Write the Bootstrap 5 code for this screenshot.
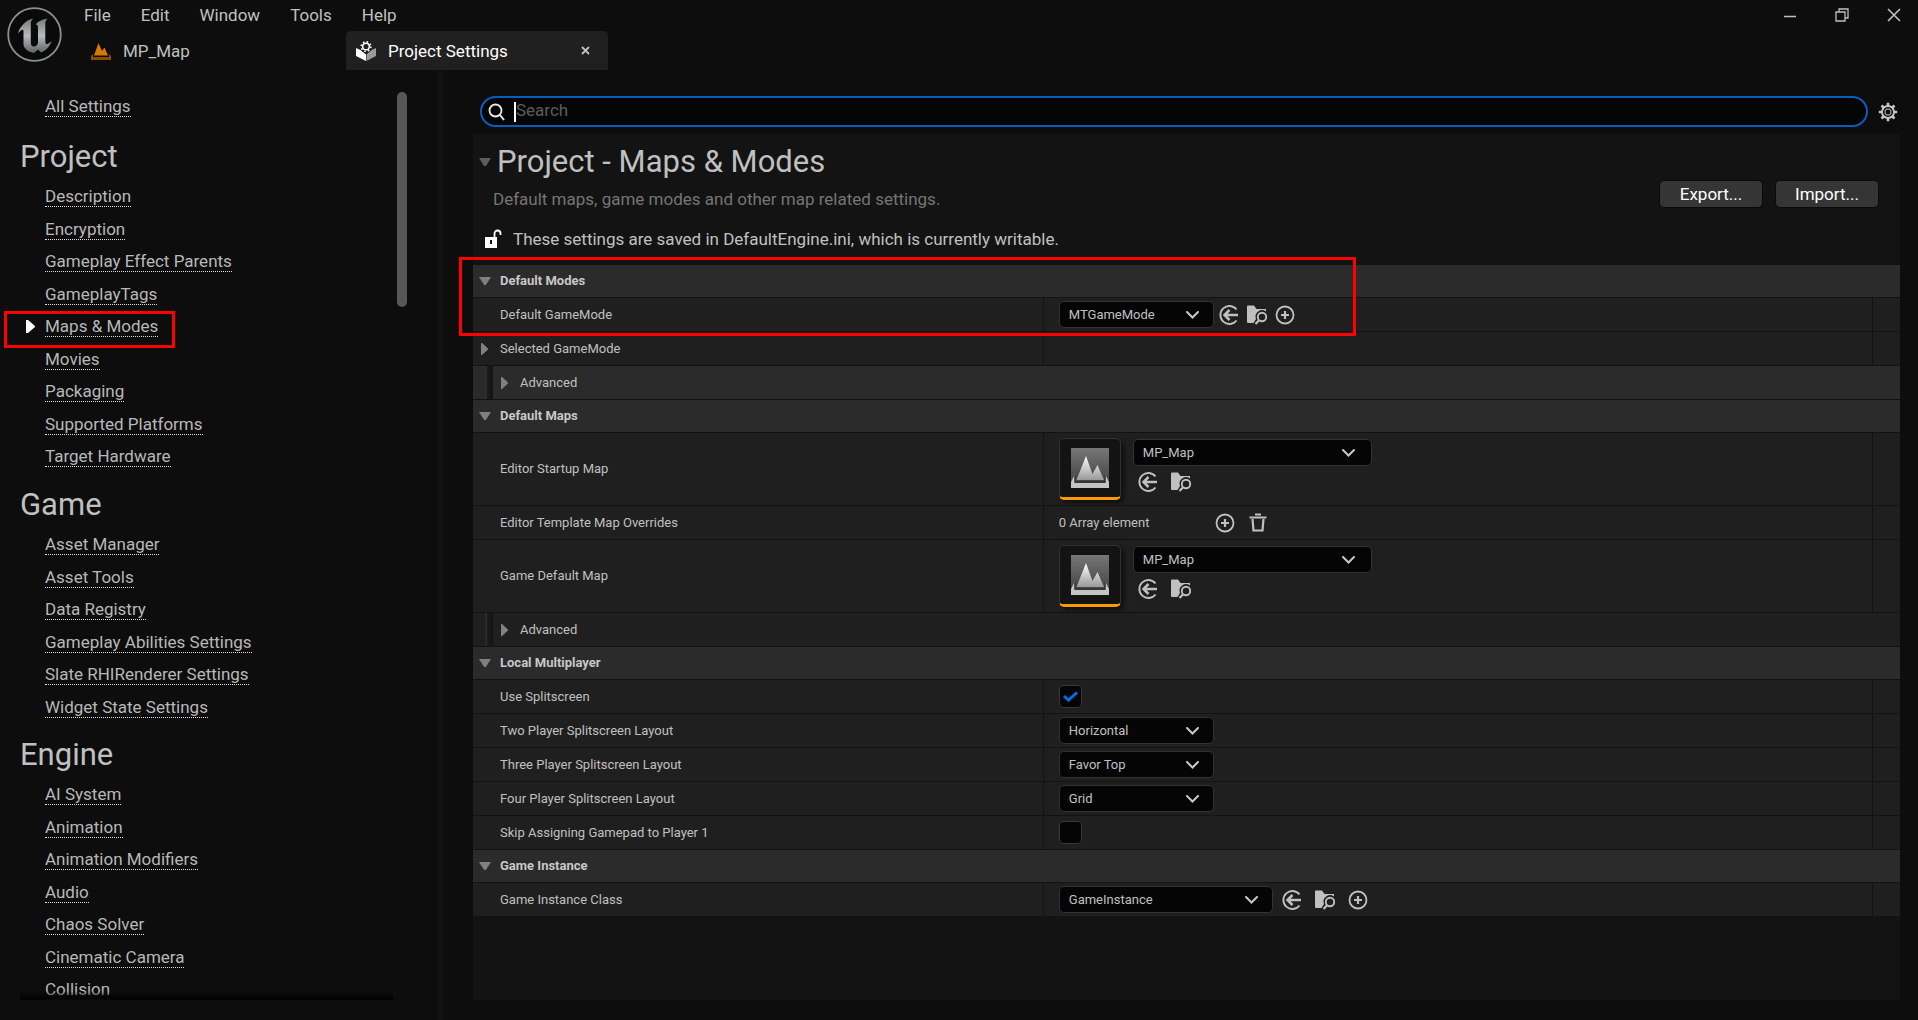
<!DOCTYPE html>
<html lang="en" data-bs-theme="dark">
<head>
<meta charset="utf-8">
<meta name="viewport" content="width=device-width, initial-scale=1">
<title>Project Settings</title>
<link href="https://cdn.jsdelivr.net/npm/bootstrap@5.3.0/dist/css/bootstrap.min.css" rel="stylesheet">
<style>
body{background:#0d0d0d;color:#c0c0c0;font-family:Roboto,"Liberation Sans",sans-serif;font-size:17px;line-height:20px;overflow:hidden}
svg{display:block;flex:none}
.plain-btn{background:none;border:0;padding:0;color:#c0c0c0}
.brand-logo{width:84px;padding:6px}
.title-row{height:31px;padding-bottom:2px}
.top-menu{gap:30px}
.top-menu a{color:#c0c0c0;text-decoration:none}
.window-btns{gap:22px;padding-right:17px}
.doc-tab{height:39px;width:262px;padding:0 12px 0 7px}
.doc-tab a{color:inherit;text-decoration:none}
.doc-tab.is-active{background:#202020;color:#fff;border-radius:5px 5px 0 0;padding:0 18px 0 10px}
.work-area{min-height:0}
.side-panel{width:438px;padding:22px 31px 20px 0}
.side-scroll{overflow:hidden;position:relative;padding-left:20px}
.side-scroll h2{font-size:31px;line-height:40px;margin:10px 0 5px;font-weight:400;color:#c0c0c0}
.side-scroll ul{padding-left:25px}
.side-scroll .side-top{padding-bottom:2px}
.side-scroll li{height:32px;padding-top:4px;position:relative}
.side-scroll li:nth-child(odd){height:33px}
.side-scroll li a{display:inline-block;color:#b8b8b8;text-decoration:none;line-height:20px;border-bottom:1px dotted #e0e0e0}
.side-fade{position:absolute;left:20px;right:0;bottom:0;height:9px;background:linear-gradient(rgba(0,0,0,0),#000)}
.side-thumb{width:10px;height:215px;border-radius:5px;background:#575757}
.splitter{width:5px;background:#121212}
.callout-box{position:absolute;border:3px solid #f00;pointer-events:none;z-index:5}
.callout-side{left:-41px;top:-1px;width:171px;height:37px}
.callout-modes{left:-14px;top:-8px;width:897px;height:79px}
.current-mark{position:absolute;left:-19px;top:8px}
.main-panel{padding:26px 18px 20px 30px}
.search-box{height:31px;border:2px solid #0a5cbf;border-radius:16px;background:#050505;margin-left:7px;padding:0 6px}
.search-box input{background:none;border:0;outline:0;color:#c0c0c0;padding:0 0 4px}
.search-box input::placeholder{color:#5c5c5c;opacity:1}
.caret-bar{width:2px;height:20px;background:#fff}
.sheet{background:#131313;margin-top:7px}
.sheet-head{height:131px;padding-top:8px}
.sheet-head h1{font-size:31px;line-height:40px;color:#c0c0c0;font-weight:400}
.sheet-head p{line-height:24px;margin:0}
.sheet-head .muted-line{color:#757575;padding-left:20px;margin-top:5px}
.io-group{gap:12px;padding:38px 21px 0 0}
.io-btn{height:28px;background:#353535;border:1px solid #0a0a0a;border-radius:5px;color:#fff;padding:0;width:104px}
.prop-list{font-size:13px;line-height:18px}
.prop-line{height:34px;border-bottom:1px solid #131313;background:#1f1f1f}
.prop-line.is-tall{height:73px}
.prop-head{height:33px;background:#2b2b2b;border-bottom:1px solid #131313;font-weight:700;color:#c8c8c8;padding-left:6px}
.prop-name{width:40%;padding-left:6px;border-right:1px solid #131313}
.tri{width:12px;margin-right:9px}
.prop-value{padding-left:15px}
.prop-end{width:28px;border-left:1px solid #131313}
.prop-adv .indent{width:20px;margin-right:6px;background:linear-gradient(90deg,rgba(0,0,0,0) 60%,#333 65%,#1c1c1c 72%,#131313)}
.prop-adv.is-lit{background:#2b2b2b}
.tool-icons{gap:8px;padding-left:5px}
.tool-icons.is-wide{gap:13px}
.map-tools{padding-top:6px}
.map-tools .tool-icons{margin-top:6px}
.array-count{width:156px}
.pick{height:27px;width:155px;padding:0 30px 0 9px;font-size:13px;line-height:18px;color:#c0c0c0;border:1px solid #323232;border-radius:5px;background-color:#050505;background-position:right 14px center;background-size:13px 8px;background-image:url("data:image/svg+xml,%3csvg xmlns='http://www.w3.org/2000/svg' viewBox='0 0 13 8'%3e%3cpath fill='none' stroke='%23c8c8c8' stroke-width='2' stroke-linecap='round' d='M1 1 6.500 6.500 12 1'/%3e%3c/svg%3e")}
.pick-wide{width:214px}
.pick-map{width:239px;background-position:right 16px center}
.map-thumb{width:62px;height:62px;background:#131313;border:1px solid #323232;border-bottom:3px solid #f90;border-radius:5px;box-shadow:3px 3px 4px rgba(0,0,0,.5);margin-right:12px}
.form-check-input.tick{width:23px;height:23px;margin:0;background-color:#050505;border:1px solid #383838;border-radius:4px}
.form-check-input.tick:checked{background-size:17px;background-image:url("data:image/svg+xml,%3csvg xmlns='http://www.w3.org/2000/svg' viewBox='0 0 17 17'%3e%3cpath fill='none' stroke='%230070e0' stroke-width='3' d='M2 8 6.500 12 15 4.500'/%3e%3c/svg%3e")}
</style>
</head>
<body class="vh-100 d-flex flex-column">
<svg width="0" height="0" class="position-absolute" aria-hidden="true">
<defs>
<linearGradient id="steel" x1="0" y1="0" x2="0" y2="1"><stop offset="0" stop-color="#777b7b"/><stop offset=".5" stop-color="#b8bcbe"/><stop offset="1" stop-color="#5c6262"/></linearGradient>
<linearGradient id="sky" x1="0" y1="0" x2="0" y2="1"><stop offset="0" stop-color="#777"/><stop offset="1" stop-color="#3c3c3c"/></linearGradient>
<linearGradient id="peak" x1="0" y1="0" x2="0" y2="1"><stop offset="0" stop-color="#fff"/><stop offset="1" stop-color="#999"/></linearGradient>
<symbol id="i-use" viewBox="0 0 20 20"><path d="M17.500 4.500A9 9 0 1 0 17.500 15.500" fill="none" stroke="#c0c0c0" stroke-width="1.900"/><path d="M19 10H6M10.500 5 5.500 10l5 5" fill="none" stroke="#c0c0c0" stroke-width="2.500"/></symbol>
<symbol id="i-browse" viewBox="0 0 20 20"><path d="M0 1.500Q0 .5 1 .5H7L9.500 4H19V6.500A6.500 6.500 0 0 0 9 14L6.500 18H1Q0 18 0 17Z" fill="#c0c0c0"/><circle cx="15" cy="12" r="4.200" fill="none" stroke="#c0c0c0" stroke-width="1.900"/><path d="M12 15.200 8.500 19" stroke="#c0c0c0" stroke-width="2.200"/></symbol>
<symbol id="i-add" viewBox="0 0 20 20"><circle cx="10" cy="10" r="8.500" fill="none" stroke="#c0c0c0" stroke-width="1.800"/><path d="M10 6v8M6 10h8" stroke="#c0c0c0" stroke-width="2.200"/></symbol>
<symbol id="i-trash" viewBox="0 0 20 20"><path d="M7 1.500h6M1.500 4.500h17" stroke="#c0c0c0" stroke-width="2.200"/><path d="M4.500 6 5.500 17.500H14.500L15.500 6" fill="none" stroke="#c0c0c0" stroke-width="2.200"/></symbol>
<symbol id="i-map" viewBox="0 0 38 40"><path d="M0 0H38V40H0Z" fill="url(#sky)"/><path d="M5.500 32 15 8 21.500 26 26.500 17 33 32Z" fill="url(#peak)"/><path d="M0 34 4 26V35H34V26L38 34V40H0Z" fill="#c4c4c4"/><path d="M4 27V34H34V27" fill="none" stroke="#333" stroke-width="1.500"/></symbol>
<symbol id="i-down" viewBox="0 0 12 9"><path d="M0 0H12L6.800 8H5.200Z" fill="#808080"/></symbol>
<symbol id="i-right" viewBox="0 0 12 12"><path d="M2 0H3L9 5.500V6.500L3 12H2Z" fill="#808080"/></symbol>
</defs>
</svg>

<header class="d-flex flex-shrink-0">
  <div class="brand-logo">
    <svg width="57" height="57" viewBox="0 0 57 57"><circle cx="28.500" cy="28.500" r="26.300" fill="#0a0a0a" stroke="#8c9090" stroke-width="1.800"/><path d="M12 27.500C13.500 21 20 13.500 27.500 12.500C24.800 14.800 24.800 16 24.800 18V36C24.800 39.500 26 41 28.500 40.500C30.500 40 32 38.500 32 36.500V21.500C32 19 31 18.500 29.500 18.500C33 14.500 37 13.500 41.500 12.500C39.800 14.500 39.300 16 39.300 18V35.500C39.300 38.500 41 39.500 45.500 35C43.500 41 39.500 45 35 46.500L32 43.500L28 47C22 46 17.500 42.500 17.500 38V25C17.500 22.500 14.500 24 12 27.500Z" fill="url(#steel)"/></svg>
  </div>
  <div class="flex-grow-1">
    <div class="title-row d-flex justify-content-between">
      <nav class="top-menu d-flex align-items-center" aria-label="Main menu"><a href="#">File</a><a href="#">Edit</a><a href="#">Window</a><a href="#">Tools</a><a href="#">Help</a></nav>
      <div class="window-btns d-flex">
        <button class="plain-btn px-2" aria-label="Minimize"><svg width="14" height="14"><path d="M1 8.500H13" stroke="#c0c0c0" stroke-width="1.500"/></svg></button>
        <button class="plain-btn px-2" aria-label="Restore"><svg width="14" height="14"><path d="M1 4H10V13H1ZM4 4V1H13V10H10" fill="none" stroke="#c0c0c0" stroke-width="1.300"/></svg></button>
        <button class="plain-btn ps-2" aria-label="Close"><svg width="14" height="14"><path d="M1 1 13 13M13 1 1 13" stroke="#c0c0c0" stroke-width="1.600"/></svg></button>
      </div>
    </div>
    <div class="d-flex">
      <div class="doc-tab d-flex align-items-center gap-2"><svg width="20" height="20" viewBox="0 0 20 20"><path d="M3 14.500 7.500 2 11 10 13.500 6.500 17 14.500Z" fill="#d87a00"/><path d="M0 19V15L2 13V16H18V13L20 15V19Z" fill="#8a4e00"/></svg><a href="#" class="ms-1">MP_Map</a></div>
      <div class="doc-tab is-active d-flex align-items-center gap-2"><svg width="20" height="20" viewBox="0 0 20 20"><path d="M0 7 4.500 9 10 13.500V20L0 15Z" fill="#fff"/><path d="M20 7 15.500 9 10.500 13.500V20L20 15Z" fill="#999"/><circle cx="10" cy="5.500" r="6.200" fill="#202020"/><circle cx="10" cy="5.500" r="3.300" fill="none" stroke="#fff" stroke-width="1.500"/><circle cx="10" cy="5.500" r="4.800" fill="none" stroke="#fff" stroke-width="1.600" stroke-dasharray="1.600 2.170"/></svg><a href="#" class="ms-1">Project Settings</a><button class="plain-btn ms-auto" aria-label="Close tab"><svg width="9" height="9"><path d="M1 1 8 8M8 1 1 8" stroke="#c0c0c0" stroke-width="1.800"/></svg></button></div>
    </div>
  </div>
</header>

<div class="work-area d-flex flex-grow-1">
  <aside class="side-panel d-flex flex-shrink-0">
    <nav class="side-scroll flex-grow-1" aria-label="Settings sections">
      <ul class="side-top list-unstyled mb-0"><li><a href="#">All Settings</a></li></ul>
      <h2>Project</h2>
      <ul class="list-unstyled mb-0"><li><a href="#">Description</a></li><li><a href="#">Encryption</a></li><li><a href="#">Gameplay Effect Parents</a></li><li><a href="#">GameplayTags</a></li><li><svg class="current-mark" width="9" height="13"><path d="M0 0H2L9 6V7L2 13H0Z" fill="#fff"/></svg><a href="#">Maps &amp; Modes</a><div class="callout-box callout-side"></div></li><li><a href="#">Movies</a></li><li><a href="#">Packaging</a></li><li><a href="#">Supported Platforms</a></li><li><a href="#">Target Hardware</a></li></ul>
      <h2>Game</h2>
      <ul class="list-unstyled mb-0"><li><a href="#">Asset Manager</a></li><li><a href="#">Asset Tools</a></li><li><a href="#">Data Registry</a></li><li><a href="#">Gameplay Abilities Settings</a></li><li><a href="#">Slate RHIRenderer Settings</a></li><li><a href="#">Widget State Settings</a></li></ul>
      <h2>Engine</h2>
      <ul class="list-unstyled mb-0"><li><a href="#">AI System</a></li><li><a href="#">Animation</a></li><li><a href="#">Animation Modifiers</a></li><li><a href="#">Audio</a></li><li><a href="#">Chaos Solver</a></li><li><a href="#">Cinematic Camera</a></li><li><a href="#">Collision</a></li></ul>
      <div class="side-fade"></div>
    </nav>
    <div class="side-thumb ms-1"></div>
  </aside>
  <div class="splitter flex-shrink-0"></div>
  <main class="main-panel flex-grow-1 d-flex flex-column">
    <div class="d-flex align-items-center">
      <div class="search-box d-flex align-items-center flex-grow-1">
        <svg width="18" height="18" viewBox="0 0 18 18"><circle cx="7.500" cy="7.500" r="6" fill="none" stroke="#e8e8e8" stroke-width="1.800"/><path d="M12 12 16 17" stroke="#e8e8e8" stroke-width="2"/></svg>
        <span class="caret-bar ms-2"></span><input type="text" class="flex-grow-1" placeholder="Search" aria-label="Search settings">
      </div>
      <button class="plain-btn ms-2" aria-label="View options"><svg width="24" height="20" viewBox="0 0 24 20"><g fill="none" stroke="#c8c8c8"><circle cx="12" cy="10" r="6" stroke-width="1.800"/><circle cx="12" cy="10" r="3" stroke="#888" stroke-width="1.400"/><path d="M12 .8V4M12 16v3.200M2.800 10H6M18 10h3.200M5.500 3.500 8 6M16 14l2.500 2.500M5.500 16.500 8 14M16 6l2.500-2.500" stroke-width="2.600"/></g></svg></button>
    </div>
    <section class="sheet flex-grow-1">
      <div class="sheet-head d-flex">
        <div class="flex-grow-1">
          <div class="d-flex align-items-center"><svg class="ms-1" width="16" height="9" viewBox="0 0 16 9"><path d="M2 0H14L9 8H7Z" fill="#5c5c5c"/></svg><h1 class="mb-0 ms-1">Project - Maps &amp; Modes</h1></div>
          <p class="muted-line">Default maps, game modes and other map related settings.</p>
          <p class="d-flex align-items-center mt-3 ps-2"><svg width="24" height="20" viewBox="0 0 24 20"><path d="M4 8H16V19H4Z" fill="#fff"/><path d="M13.500 8V4.500A3 3 0 0 1 19.500 4.500V6" fill="none" stroke="#fff" stroke-width="1.800"/><path d="M9 11h2v4h-2z" fill="#131313"/></svg><span class="ms-2">These settings are saved in DefaultEngine.ini, which is currently writable.</span></p>
        </div>
        <div class="io-group d-flex"><button class="io-btn">Export...</button><button class="io-btn">Import...</button></div>
      </div>
      <div class="prop-list">
        <div class="position-relative">
          <div class="prop-head d-flex align-items-center"><svg class="tri" width="12" height="9"><use href="#i-down"/></svg>Default Modes</div>
          <div class="prop-line d-flex"><label for="gm" class="prop-name d-flex align-items-center"><span class="tri"></span>Default GameMode</label><div class="prop-value flex-grow-1 d-flex align-items-center"><select id="gm" class="form-select pick"><option>MTGameMode</option></select><div class="tool-icons d-flex"><button class="plain-btn" aria-label="Use selected"><svg width="20" height="20"><use href="#i-use"/></svg></button><button class="plain-btn" aria-label="Browse"><svg width="20" height="20"><use href="#i-browse"/></svg></button><button class="plain-btn" aria-label="Add"><svg width="20" height="20"><use href="#i-add"/></svg></button></div></div><div class="prop-end"></div></div>
          <div class="callout-box callout-modes"></div>
        </div>
        <div class="prop-line d-flex"><div class="prop-name d-flex align-items-center"><svg class="tri" width="12" height="12"><use href="#i-right"/></svg>Selected GameMode</div><div class="flex-grow-1"></div><div class="prop-end"></div></div>
        <div class="prop-line prop-adv is-lit d-flex align-items-center"><span class="indent align-self-stretch"></span><svg class="tri" width="12" height="12"><use href="#i-right"/></svg>Advanced</div>

        <div class="prop-head d-flex align-items-center"><svg class="tri" width="12" height="9"><use href="#i-down"/></svg>Default Maps</div>
        <div class="prop-line is-tall d-flex"><label for="em" class="prop-name d-flex align-items-center"><span class="tri"></span>Editor Startup Map</label><div class="prop-value flex-grow-1 d-flex align-items-center"><div class="map-thumb d-flex align-items-center justify-content-center"><svg width="38" height="40"><use href="#i-map"/></svg></div><div class="map-tools align-self-start"><select id="em" class="form-select pick pick-map"><option>MP_Map</option></select><div class="tool-icons is-wide d-flex"><button class="plain-btn" aria-label="Use selected"><svg width="20" height="20"><use href="#i-use"/></svg></button><button class="plain-btn" aria-label="Browse"><svg width="20" height="20"><use href="#i-browse"/></svg></button></div></div></div><div class="prop-end"></div></div>
        <div class="prop-line d-flex"><div class="prop-name d-flex align-items-center"><span class="tri"></span>Editor Template Map Overrides</div><div class="prop-value flex-grow-1 d-flex align-items-center"><span class="array-count">0 Array element</span><div class="tool-icons is-wide ps-0 d-flex"><button class="plain-btn" aria-label="Add element"><svg width="20" height="20"><use href="#i-add"/></svg></button><button class="plain-btn" aria-label="Clear"><svg width="20" height="20"><use href="#i-trash"/></svg></button></div></div><div class="prop-end"></div></div>
        <div class="prop-line is-tall d-flex"><label for="dm" class="prop-name d-flex align-items-center"><span class="tri"></span>Game Default Map</label><div class="prop-value flex-grow-1 d-flex align-items-center"><div class="map-thumb d-flex align-items-center justify-content-center"><svg width="38" height="40"><use href="#i-map"/></svg></div><div class="map-tools align-self-start"><select id="dm" class="form-select pick pick-map"><option>MP_Map</option></select><div class="tool-icons is-wide d-flex"><button class="plain-btn" aria-label="Use selected"><svg width="20" height="20"><use href="#i-use"/></svg></button><button class="plain-btn" aria-label="Browse"><svg width="20" height="20"><use href="#i-browse"/></svg></button></div></div></div><div class="prop-end"></div></div>
        <div class="prop-line prop-adv d-flex align-items-center"><span class="indent align-self-stretch"></span><svg class="tri" width="12" height="12"><use href="#i-right"/></svg>Advanced</div>

        <div class="prop-head d-flex align-items-center"><svg class="tri" width="12" height="9"><use href="#i-down"/></svg>Local Multiplayer</div>
        <div class="prop-line d-flex"><label for="us" class="prop-name d-flex align-items-center"><span class="tri"></span>Use Splitscreen</label><div class="prop-value flex-grow-1 d-flex align-items-center"><input id="us" type="checkbox" class="form-check-input tick" checked></div><div class="prop-end"></div></div>
        <div class="prop-line d-flex"><label for="p2" class="prop-name d-flex align-items-center"><span class="tri"></span>Two Player Splitscreen Layout</label><div class="prop-value flex-grow-1 d-flex align-items-center"><select id="p2" class="form-select pick"><option>Horizontal</option></select></div><div class="prop-end"></div></div>
        <div class="prop-line d-flex"><label for="p3" class="prop-name d-flex align-items-center"><span class="tri"></span>Three Player Splitscreen Layout</label><div class="prop-value flex-grow-1 d-flex align-items-center"><select id="p3" class="form-select pick"><option>Favor Top</option></select></div><div class="prop-end"></div></div>
        <div class="prop-line d-flex"><label for="p4" class="prop-name d-flex align-items-center"><span class="tri"></span>Four Player Splitscreen Layout</label><div class="prop-value flex-grow-1 d-flex align-items-center"><select id="p4" class="form-select pick"><option>Grid</option></select></div><div class="prop-end"></div></div>
        <div class="prop-line d-flex"><label for="sk" class="prop-name d-flex align-items-center"><span class="tri"></span>Skip Assigning Gamepad to Player 1</label><div class="prop-value flex-grow-1 d-flex align-items-center"><input id="sk" type="checkbox" class="form-check-input tick"></div><div class="prop-end"></div></div>

        <div class="prop-head d-flex align-items-center"><svg class="tri" width="12" height="9"><use href="#i-down"/></svg>Game Instance</div>
        <div class="prop-line d-flex"><label for="gi" class="prop-name d-flex align-items-center"><span class="tri"></span>Game Instance Class</label><div class="prop-value flex-grow-1 d-flex align-items-center"><select id="gi" class="form-select pick pick-wide"><option>GameInstance</option></select><div class="tool-icons is-wide d-flex ms-1"><button class="plain-btn" aria-label="Use selected"><svg width="20" height="20"><use href="#i-use"/></svg></button><button class="plain-btn" aria-label="Browse"><svg width="20" height="20"><use href="#i-browse"/></svg></button><button class="plain-btn" aria-label="Add"><svg width="20" height="20"><use href="#i-add"/></svg></button></div></div><div class="prop-end"></div></div>
      </div>
    </section>
  </main>
</div>
<script src="https://cdn.jsdelivr.net/npm/bootstrap@5.3.0/dist/js/bootstrap.bundle.min.js"></script>
</body>
</html>
